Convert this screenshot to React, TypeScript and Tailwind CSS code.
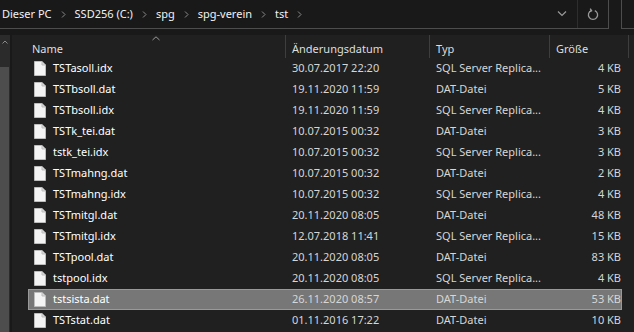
import React from "react";

const rows = [
  ["TSTasoll.idx", "30.07.2017 22:20", "SQL Server Replica...", "4 KB"],
  ["TSTbsoll.dat", "19.11.2020 11:59", "DAT-Datei", "5 KB"],
  ["TSTbsoll.idx", "19.11.2020 11:59", "SQL Server Replica...", "4 KB"],
  ["TSTk_tei.dat", "10.07.2015 00:32", "DAT-Datei", "3 KB"],
  ["tstk_tei.idx", "10.07.2015 00:32", "SQL Server Replica...", "3 KB"],
  ["TSTmahng.dat", "10.07.2015 00:32", "DAT-Datei", "2 KB"],
  ["TSTmahng.idx", "10.07.2015 00:32", "SQL Server Replica...", "4 KB"],
  ["TSTmitgl.dat", "20.11.2020 08:05", "DAT-Datei", "48 KB"],
  ["TSTmitgl.idx", "12.07.2018 11:41", "SQL Server Replica...", "15 KB"],
  ["TSTpool.dat", "20.11.2020 08:05", "DAT-Datei", "83 KB"],
  ["tstpool.idx", "20.11.2020 08:05", "SQL Server Replica...", "4 KB"],
  ["tstsista.dat", "26.11.2020 08:57", "DAT-Datei", "53 KB"],
  ["TSTstat.dat", "01.11.2016 17:22", "DAT-Datei", "10 KB"],
];

function Chev() {
  return (
    <svg width="5" height="7" viewBox="0 0 5 7" className="mx-[9px] shrink-0">
      <path d="M1 0.5 L4 3.5 L1 6.5" stroke="#8a8a8a" strokeWidth="1" fill="none" />
    </svg>
  );
}

function FileIcon() {
  return (
    <svg width="12" height="15" viewBox="0 0 12 15">
      <path d="M0.5 0.5 H8 L11.5 4 V14.5 H0.5 Z" fill="#f4f4f4" stroke="#bdbdbd" strokeWidth="1" />
      <path d="M8 0.5 V4 H11.5" fill="#d8d8d8" stroke="#bdbdbd" strokeWidth="1" />
    </svg>
  );
}

export default function App() {
  return (
    <div
      className="w-[634px] h-[332px] bg-[#191919] overflow-hidden text-[11px] whitespace-nowrap flex flex-col"
      style={{ fontFamily: '"Noto Sans", Roboto, sans-serif' }}
    >
      <div className="flex h-[29px] shrink-0">
        <div className="w-[609px] h-[29px] border-r border-b border-[#4d4d4d] bg-[#191919] flex items-center text-[#f2f2f2]">
          <span className="ml-[2px]">Dieser PC</span>
          <Chev />
          <span>SSD256 (C:)</span>
          <Chev />
          <span>spg</span>
          <Chev />
          <span>spg-verein</span>
          <Chev />
          <span>tst</span>
          <Chev />
          <div className="flex-1" />
          <svg width="10" height="6" viewBox="0 0 10 6" className="mr-[10px]">
            <path d="M1 0.5 L5 4.5 L9 0.5" stroke="#9a9a9a" strokeWidth="1.2" fill="none" />
          </svg>
          <div className="w-px h-[28px] bg-[#2e2e2e]" />
          <div className="w-[30px] flex justify-center">
            <svg width="12" height="13" viewBox="0 0 12 13">
              <path d="M4.2 2.6 A4.6 4.6 0 1 0 7.8 2.6" stroke="#9a9a9a" strokeWidth="1.3" fill="none" />
              <path d="M3.2 0.6 L4.6 2.8 L2.3 3.9" stroke="#9a9a9a" strokeWidth="1.3" fill="none" />
            </svg>
          </div>
        </div>
        <div className="w-[12px]" />
        <div className="flex-1 h-[29px] border-l border-b border-[#4d4d4d]" />
      </div>
      <div className="flex flex-1 min-h-0 mt-[6px]">
        <div className="w-[10px] bg-[#2b2b2b] flex flex-col">
          <div className="h-[32px] flex justify-center pt-[5px]">
            <svg width="6" height="4" viewBox="0 0 6 4">
              <path d="M0.5 3.5 L3 1 L5.5 3.5" stroke="#8a8a8a" strokeWidth="1" fill="none" />
            </svg>
          </div>
          <div className="flex-1 bg-[#4d4d4d] mr-[1px]" />
        </div>
        <div className="w-[2px] bg-[#191919]" />
        <div className="flex-1 bg-[#202020] flex flex-col">
          <div className="h-[23px] flex items-stretch text-[#dedede] relative">
            <div className="w-[274px] shrink-0 pl-[20px] pt-[5px] flex items-center border-r border-[#3e3e3e]">Name</div>
            <svg width="8" height="5" viewBox="0 0 8 5" className="absolute left-[140px] top-[1px]">
              <path d="M0.5 4 L4 0.8 L7.5 4" stroke="#9a9a9a" strokeWidth="1" fill="none" />
            </svg>
            <div className="w-[144px] shrink-0 pl-[6px] pt-[5px] flex items-center border-r border-[#3e3e3e]">Änderungsdatum</div>
            <div className="w-[120px] shrink-0 pl-[6px] pt-[5px] flex items-center border-r border-[#3e3e3e]">Typ</div>
            <div className="w-[79px] shrink-0 pl-[6px] pt-[5px] flex items-center border-r border-[#3e3e3e]">Größe</div>
          </div>
          <div className="flex flex-col">
            {rows.map((r, i) => {
              const sel = i === 11;
              return (
                <div
                  key={i}
                  className={
                    "h-[21px] ml-[16px] w-[594px] flex items-center border " +
                    (sel ? "bg-[#777777] border-[#999999]" : "border-transparent")
                  }
                >
                  <div className="w-[263px] shrink-0 flex items-center">
                    <div className="ml-[5px] mr-[7px] flex items-center"><FileIcon /></div>
                    <span className="text-white">{r[0]}</span>
                  </div>
                  <div className="w-[144px] shrink-0 text-[#d6d6d6]">{r[1]}</div>
                  <div className="w-[120px] shrink-0 text-[#d6d6d6]">{r[2]}</div>
                  <div className="w-[65px] shrink-0 text-right text-[#d6d6d6]">{r[3]}</div>
                </div>
              );
            })}
          </div>
        </div>
      </div>
    </div>
  );
}
